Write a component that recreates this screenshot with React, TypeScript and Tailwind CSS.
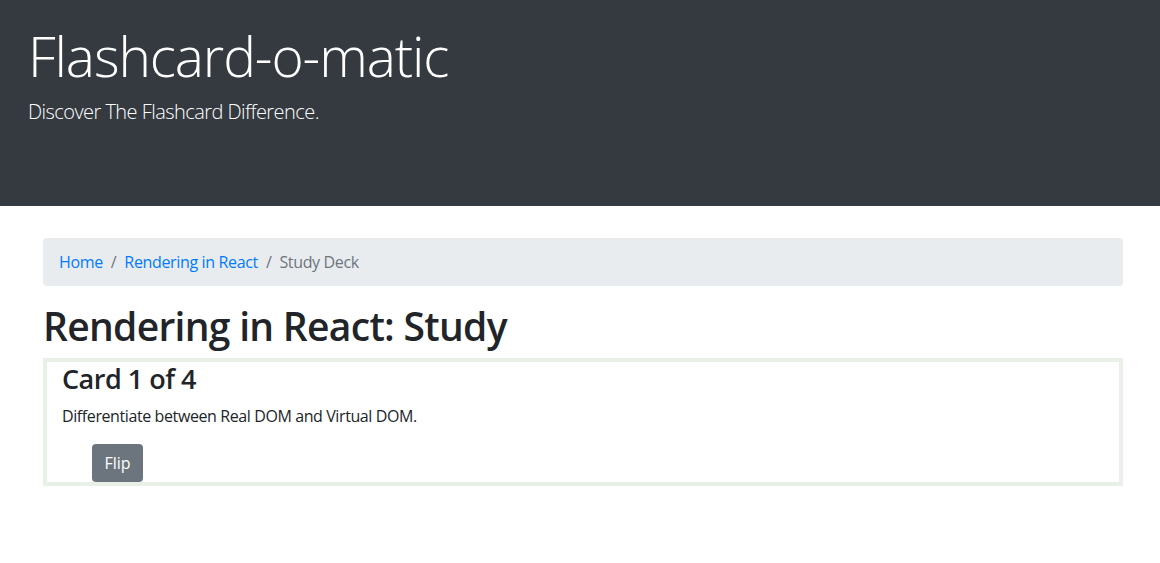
import React from "react";

const font = { fontFamily: '"Open Sans", "Noto Sans", sans-serif' };

const Header: React.FC = () => (
  <header className="h-[206px] bg-[#343a40] pt-[22px] px-[28px] text-white">
    <h1 className="text-[55px] leading-[67px] font-light tracking-[-1.1px] mb-2">Flashcard-o-matic</h1>
    <p className="text-[20px] leading-[30px] font-light tracking-[-0.55px]">Discover The Flashcard Difference.</p>
  </header>
);

const Breadcrumb: React.FC = () => (
  <nav className="flex items-center h-[48px] px-4 bg-[#e9ecef] rounded text-[16px] leading-6 tracking-[-0.35px] mb-4">
    <a href="#" className="text-[#007bff]">Home</a>
    <span className="px-2 text-[#6c757d]">/</span>
    <a href="#" className="text-[#007bff]">Rendering in React</a>
    <span className="px-2 text-[#6c757d]">/</span>
    <span className="text-[#6c757d]">Study Deck</span>
  </nav>
);

export default function App() {
  return (
    <div style={font} className="min-h-[563px] bg-white text-[#212529]">
      <Header />
      <main className="pt-8 pl-[43px] pr-[37px]">
        <Breadcrumb />
        <h1 className="text-[39px] leading-[48px] font-semibold tracking-[-0.7px] mb-2">Rendering in React: Study</h1>
        <div className="border-4 border-[#e9f0e7] px-[15px]">
          <h3 className="text-[27px] leading-[34px] font-semibold tracking-[-0.5px] mb-2">Card 1 of 4</h3>
          <p className="text-[16px] leading-6 tracking-[-0.4px] mb-4">Differentiate between Real DOM and Virtual DOM.</p>
          <button className="ml-[30px] h-[38px] w-[51px] bg-[#6c757d] text-white rounded text-[16px]">Flip</button>
        </div>
      </main>
    </div>
  );
}
